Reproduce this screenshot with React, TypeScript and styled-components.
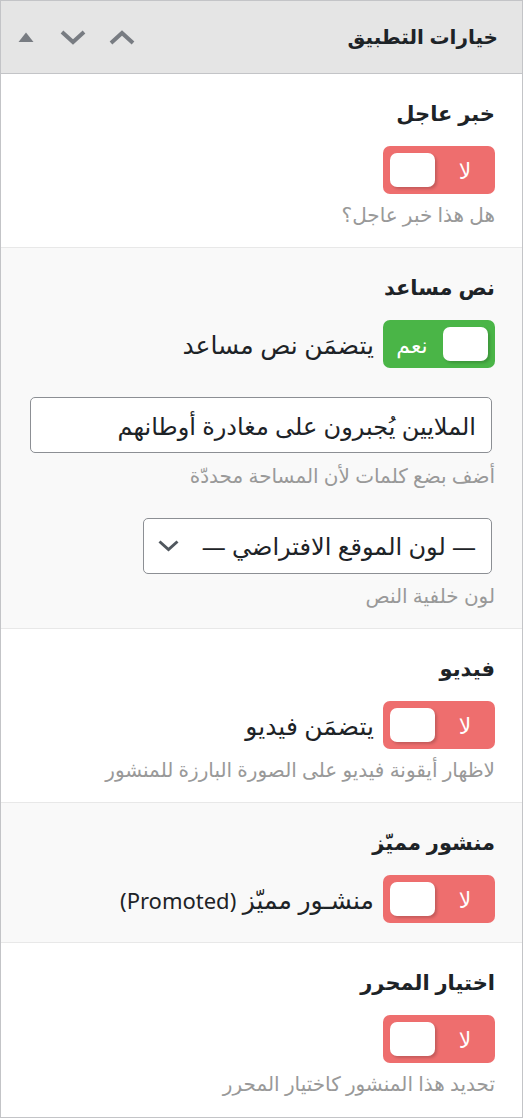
import React from "react";
import styled, { createGlobalStyle } from "styled-components";

const GlobalStyle = createGlobalStyle`
  html, body {
    margin: 0;
    padding: 0;
    background: #ffffff;
  }
  body {
    font-family: "Noto Sans", "DejaVu Sans", sans-serif;
    color: #1d2327;
  }
  * { box-sizing: border-box; }
`;

const Panel = styled.div`
  width: 523px;
  border: 1px solid #c3c4c7;
  direction: rtl;
  background: #ffffff;
`;

const Header = styled.div`
  height: 73px;
  background: #e5e5e5;
  border-bottom: 1px solid #c3c4c7;
  display: flex;
  align-items: center;
  justify-content: space-between;
  padding: 0 24px 0 16px;
`;

const Title = styled.h2`
  margin: 0;
  font-family: "Liberation Sans", "DejaVu Sans", sans-serif;
  font-weight: 700;
  font-size: 20px;
  line-height: 30px;
  color: #1d2327;
`;

const HeaderTools = styled.div`
  direction: ltr;
  display: flex;
  align-items: center;
`;

const ToolButton = styled.span<{ $w: number; $gap?: number }>`
  display: inline-flex;
  align-items: center;
  justify-content: center;
  width: ${(p) => p.$w}px;
  height: 30px;
  margin-left: ${(p) => p.$gap ?? 0}px;
  color: #787c82;
`;

const Section = styled.section<{ $alt?: boolean; $last?: boolean }>`
  background: ${(p) => (p.$alt ? "#f9f9f9" : "#ffffff")};
  border-bottom: 1px solid ${(p) => (p.$last ? "transparent" : "#e8e8e8")};
  padding: 26px 27px 19px 29px;
  display: flex;
  flex-direction: column;
  align-items: stretch;
`;

const Heading = styled.h3`
  margin: 0 0 18px;
  font-family: "Liberation Sans", "DejaVu Sans", sans-serif;
  font-weight: 700;
  font-size: 21px;
  line-height: 28px;
  color: #1d2327;
`;

const ToggleRow = styled.div`
  display: flex;
  align-items: center;
  gap: 9px;
`;

const Toggle = styled.div<{ $on?: boolean }>`
  width: 112px;
  height: 48px;
  border-radius: 7px;
  background: ${(p) => (p.$on ? "#4ab547" : "#ee6e6e")};
  display: flex;
  flex-direction: ${(p) => (p.$on ? "row" : "row-reverse")};
  align-items: center;
  padding: 0 7px;
  flex: none;
`;

const Knob = styled.span`
  width: 45px;
  height: 34px;
  border-radius: 7px;
  background: #ffffff;
  box-shadow: 2px 2px 3px rgba(0, 0, 0, 0.18);
  flex: none;
`;

const ToggleText = styled.span<{ $on?: boolean }>`
  flex: 1;
  text-align: center;
  color: #ffffff;
  font-size: 22px;
  line-height: 26px;
  padding: ${(p) => (p.$on ? "0 9px 0 0" : "0 0 0 7px")};
`;

const Label = styled.span`
  font-size: 25px;
  line-height: 30px;
  color: #1d2327;
`;

const Latin = styled.span`
  font-size: 22px;
`;

const Help = styled.p<{ $gap?: number }>`
  margin: ${(p) => p.$gap ?? 8}px 0 0;
  font-size: 20px;
  line-height: 26px;
  color: #999999;
`;

const TextInput = styled.input`
  display: block;
  width: calc(100% - 3px);
  margin: 29px 3px 0 0;
  height: 56px;
  border: 1px solid #8c8f94;
  border-radius: 5px;
  background: #ffffff;
  padding: 0 15px;
  font-family: "Noto Sans", "DejaVu Sans", sans-serif;
  font-size: 24px;
  color: #1d2327;
  direction: rtl;
  outline: none;
`;

const SelectBox = styled.div`
  width: 349px;
  height: 56px;
  margin: 29px 3px 0 0;
  border: 1px solid #8c8f94;
  border-radius: 5px;
  background: #ffffff;
  display: flex;
  align-items: center;
  justify-content: space-between;
  padding: 0 15px 0 14px;
  font-size: 24px;
  line-height: 30px;
  color: #1d2327;
`;

const Chevron = ({ up, w = 26, h = 16, sw = 4, color = "currentColor" }: { up?: boolean; w?: number; h?: number; sw?: number; color?: string }) => (
  <svg width={w} height={h} viewBox={`0 0 ${w} ${h}`} fill="none">
    <polyline
      points={
        up
          ? `${sw / 2},${h - sw / 2} ${w / 2},${sw / 2 + 1} ${w - sw / 2},${h - sw / 2}`
          : `${sw / 2},${sw / 2} ${w / 2},${h - sw / 2 - 1} ${w - sw / 2},${sw / 2}`
      }
      stroke={color}
      strokeWidth={sw}
      strokeLinejoin="miter"
    />
  </svg>
);

const SwitchControl = ({ on }: { on?: boolean }) => (
  <Toggle $on={on}>
    <Knob />
    <ToggleText $on={on}>{on ? "نعم" : "لا"}</ToggleText>
  </Toggle>
);

export default function App() {
  return (
    <>
      <GlobalStyle />
      <Panel>
        <Header>
          <Title>خيارات التطبيق</Title>
          <HeaderTools>
            <ToolButton $w={17}>
              <svg width="16" height="10" viewBox="0 0 16 10">
                <polygon points="0.5,10 8,0.5 15.5,10" fill="#787c82" />
              </svg>
            </ToolButton>
            <ToolButton $w={43} $gap={17}>
              <Chevron w={26} h={15} sw={4} />
            </ToolButton>
            <ToolButton $w={43} $gap={6}>
              <Chevron up w={26} h={15} sw={4} />
            </ToolButton>
          </HeaderTools>
        </Header>

        <Section>
          <Heading>خبر عاجل</Heading>
          <ToggleRow>
            <SwitchControl />
          </ToggleRow>
          <Help>هل هذا خبر عاجل؟</Help>
        </Section>

        <Section $alt>
          <Heading>نص مساعد</Heading>
          <ToggleRow>
            <SwitchControl on />
            <Label>يتضمَن نص مساعد</Label>
          </ToggleRow>
          <TextInput defaultValue="الملايين يُجبرون على مغادرة أوطانهم" />
          <Help $gap={10}>أضف بضع كلمات لأن المساحة محددّة</Help>
          <SelectBox>
            <span>— لون الموقع الافتراضي —</span>
            <Chevron w={21} h={12} sw={3} color="#50575e" />
          </SelectBox>
          <Help $gap={9}>لون خلفية النص</Help>
        </Section>

        <Section>
          <Heading>فيديو</Heading>
          <ToggleRow>
            <SwitchControl />
            <Label>يتضمَن فيديو</Label>
          </ToggleRow>
          <Help>لاظهار أيقونة فيديو على الصورة البارزة للمنشور</Help>
        </Section>

        <Section $alt>
          <Heading>منشور مميّز</Heading>
          <ToggleRow>
            <SwitchControl />
            <Label>
              منشـور مميّز <Latin>(Promoted)</Latin>
            </Label>
          </ToggleRow>
        </Section>

        <Section $last>
          <Heading>اختيار المحرر</Heading>
          <ToggleRow>
            <SwitchControl />
          </ToggleRow>
          <Help>تحديد هذا المنشور كاختيار المحرر</Help>
        </Section>
      </Panel>
    </>
  );
}
